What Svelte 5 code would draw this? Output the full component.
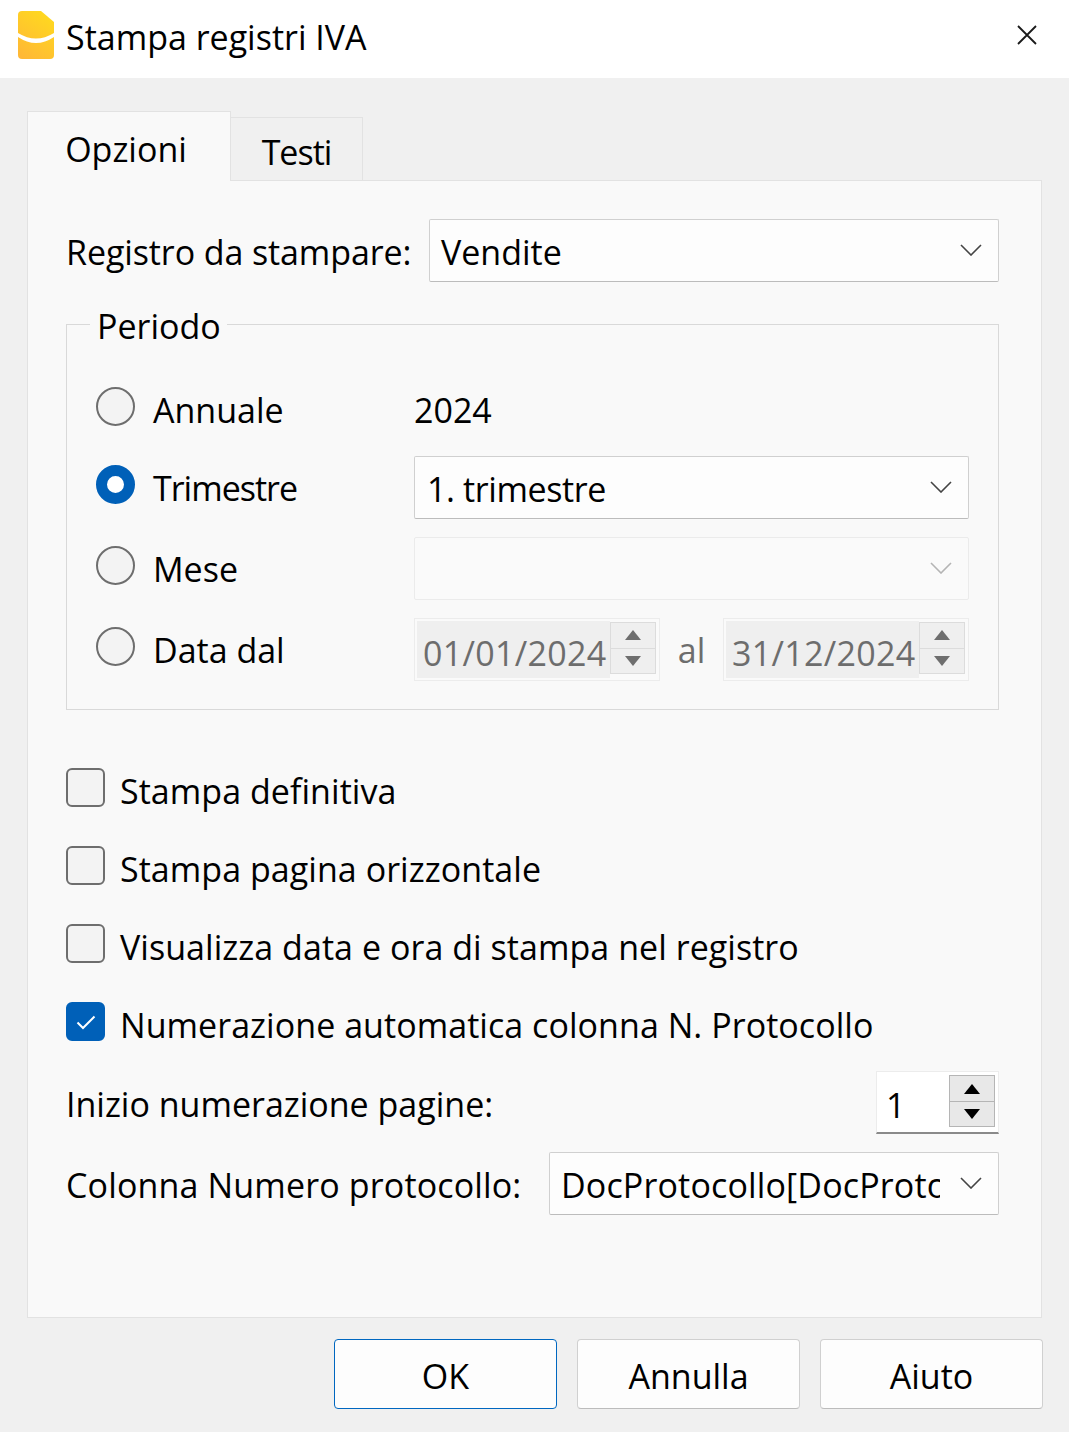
<script>
    let checks = [
        { label: "Stampa definitiva", on: false },
        { label: "Stampa pagina orizzontale", on: false },
        { label: "Visualizza data e ora di stampa nel registro", on: false },
        { label: "Numerazione automatica colonna N. Protocollo", on: true },
    ];
</script>

{#snippet chevron(color)}
    <svg class="chev" viewBox="0 0 22 12" width="22" height="12"><path d="M1 1 L11 11 L21 1" fill="none" stroke={color} stroke-width="1.6" /></svg>
{/snippet}

{#snippet arrows(color)}
    <div class="spin-btn">
        <svg viewBox="0 0 16 10" width="16" height="10"><path d="M8 0 L16 10 L0 10 Z" fill={color} /></svg>
    </div>
    <div class="spin-btn">
        <svg viewBox="0 0 16 10" width="16" height="10"><path d="M0 0 L16 0 L8 10 Z" fill={color} /></svg>
    </div>
{/snippet}

<div class="dialog">
    <header class="title">
        <svg class="logo" viewBox="0 0 36 48" width="36" height="48">
            <defs>
                <linearGradient id="g" x1="0.75" y1="0" x2="0.2" y2="1">
                    <stop offset="0" stop-color="#ffd91f" />
                    <stop offset="1" stop-color="#ffb836" />
                </linearGradient>
            </defs>
            <path d="M4 0 H23 L36 11 V44 Q36 48 32 48 H4 Q0 48 0 44 V4 Q0 0 4 0 Z" fill="url(#g)" />
            <path d="M0 22 Q18 33 36 22 V26 Q18 38 0 26 Z" fill="#fff" />
        </svg>
        <span class="title-text">Stampa registri IVA</span>
        <svg class="close" viewBox="0 0 20 20" width="20" height="20"><path d="M1 1 L19 19 M19 1 L1 19" stroke="#1a1a1a" stroke-width="1.8" /></svg>
    </header>

    <main class="body">
        <div class="tabs">
            <div class="tab active">Opzioni</div>
            <div class="tab">Testi</div>
        </div>

        <section class="pane">
            <div class="row first">
                <span class="lbl">Registro da stampare:</span>
                <div class="combo reg"><span class="val">Vendite</span>{@render chevron("#444")}</div>
            </div>

            <fieldset class="group">
                <legend>Periodo</legend>
                <div class="grid">
                    <div class="opt"><span class="radio"></span><span>Annuale</span></div>
                    <div class="year">2024</div>

                    <div class="opt"><span class="radio on"></span><span class="tight">Trimestre</span></div>
                    <div class="combo"><span class="val trim">1. trimestre</span>{@render chevron("#444")}</div>

                    <div class="opt"><span class="radio"></span><span>Mese</span></div>
                    <div class="combo off">{@render chevron("#b4b4b4")}</div>

                    <div class="opt"><span class="radio"></span><span>Data dal</span></div>
                    <div class="dates">
                        <div class="date">
                            <span class="date-val">01/01/2024</span>
                            <div class="spin off">{@render arrows("#6e6e6e")}</div>
                        </div>
                        <span class="al">al</span>
                        <div class="date">
                            <span class="date-val">31/12/2024</span>
                            <div class="spin off">{@render arrows("#6e6e6e")}</div>
                        </div>
                    </div>
                </div>
            </fieldset>

            <div class="checks">
                {#each checks as c}
                    <div class="check">
                        <span class="box" class:on={c.on}>
                            {#if c.on}
                                <svg viewBox="0 0 20 16" width="20" height="16"><path d="M1.5 8.5 L7 14 L18.5 2.5" fill="none" stroke="#fff" stroke-width="2" /></svg>
                            {/if}
                        </span>
                        <span>{c.label}</span>
                    </div>
                {/each}
            </div>

            <div class="row pages">
                <span class="lbl">Inizio numerazione pagine:</span>
                <div class="num">
                    <span class="num-val">1</span>
                    <div class="spin">{@render arrows("#000")}</div>
                </div>
            </div>

            <div class="row proto">
                <span class="lbl">Colonna Numero protocollo:</span>
                <div class="combo col"><span class="val clip">DocProtocollo[DocProtocollo]</span>{@render chevron("#444")}</div>
            </div>
        </section>

        <footer class="buttons">
            <button class="default">OK</button>
            <button>Annulla</button>
            <button>Aiuto</button>
        </footer>
    </main>
</div>

<style>
    :global(body) {
        margin: 0;
        background: #f0f0f0;
    }

    .dialog {
        width: 1069px;
        height: 1432px;
        font-family: "Open Sans", "Noto Sans", sans-serif;
        font-size: 34px;
        color: #000;
        overflow: hidden;
    }

    .title {
        height: 78px;
        background: #fff;
        display: flex;
        align-items: flex-start;
        padding: 11px 32px 0 18px;
        box-sizing: border-box;
    }

    .title-text {
        margin-left: 12px;
        margin-top: 3px;
        line-height: 46px;
    }

    .close {
        margin-left: auto;
        margin-top: 14px;
    }

    .body {
        padding: 33px 26px 0 27px;
    }

    .tabs {
        display: flex;
        align-items: flex-end;
        height: 70px;
        position: relative;
        z-index: 1;
    }

    .tab {
        box-sizing: border-box;
        width: 132px;
        height: 63px;
        margin-bottom: 1px;
        background: #f0f0f0;
        border: 1px solid #e2e2e2;
        border-width: 1px 1px 0 0;
        text-align: center;
        line-height: 68px;
        letter-spacing: -1px;
    }

    .tab.active {
        width: 204px;
        height: 70px;
        margin-bottom: 0;
        background: #f9f9f9;
        border-width: 1px 1px 0 1px;
        line-height: 74px;
        padding-right: 6px;
        letter-spacing: 0;
    }

    .pane {
        box-sizing: border-box;
        width: 1015px;
        height: 1138px;
        margin-top: -1px;
        background: #f9f9f9;
        border: 1px solid #e2e2e2;
        padding: 38px 42px 0 38px;
    }

    .row {
        display: flex;
        align-items: center;
        justify-content: space-between;
        height: 63px;
    }

    .lbl {
        padding-top: 2px;
    }

    .first .lbl {
        letter-spacing: -0.1px;
    }

    .combo {
        box-sizing: border-box;
        height: 63px;
        background: #fdfdfd;
        border: 1px solid #d0d0d0;
        border-bottom-color: #bcbcbc;
        border-radius: 2px;
        display: flex;
        align-items: center;
        padding: 0 16px 0 12px;
    }

    .combo.off {
        background: #fafafa;
        border-color: #ebebeb;
    }

    .combo.reg {
        width: 570px;
        padding-left: 11px;
    }

    .combo.col {
        width: 450px;
        padding-left: 11px;
    }

    .val {
        flex: 1;
        white-space: nowrap;
        padding-top: 2px;
    }

    .val.trim {
        letter-spacing: -0.4px;
    }

    .val.clip {
        overflow: hidden;
        margin-right: 20px;
        letter-spacing: 0.15px;
    }

    .chev {
        margin-left: auto;
        margin-top: -2px;
    }

    .group {
        margin: 20px 0 0;
        padding: 0;
        width: 933px;
        box-sizing: border-box;
        height: 408px;
        border: 1px solid #d9d9d9;
        min-width: 0;
    }

    legend {
        margin-left: 23px;
        padding: 4px 6px 0 7px;
        line-height: 40px;
    }

    .grid {
        display: grid;
        grid-template-columns: 318px 555px;
        grid-template-rows: 60px 63px 63px 63px;
        row-gap: 18px;
        padding: 32px 0 0 29px;
    }

    .opt {
        display: flex;
        align-items: center;
        gap: 18px;
        padding-top: 1px;
    }

    .opt:first-child {
        padding-top: 3px;
    }

    .radio {
        box-sizing: border-box;
        width: 39px;
        height: 39px;
        border-radius: 50%;
        background: #f3f3f3;
        border: 2px solid #6e6e6e;
        margin-top: -8px;
        flex: none;
    }

    .opt:first-child .radio {
        margin-top: -6px;
    }

    .radio.on {
        background: #fff;
        border: 11.5px solid #0060b8;
    }

    .tight {
        letter-spacing: -1px;
    }

    .year {
        display: flex;
        align-items: center;
        padding-top: 4px;
    }

    .dates {
        display: flex;
        align-items: center;
        justify-content: space-between;
    }

    .date {
        box-sizing: border-box;
        width: 246px;
        height: 63px;
        background: #fafafa;
        border: 1px solid #ececec;
        display: flex;
        align-items: center;
        padding: 0 3px 0 2px;
        color: #6d6d6d;
    }

    .date-val {
        box-sizing: border-box;
        width: 193px;
        height: 57px;
        background: #efefef;
        padding: 4px 0 0 6px;
        line-height: 57px;
        letter-spacing: 0.3px;
    }

    .al {
        color: #6d6d6d;
    }

    .spin {
        box-sizing: border-box;
        width: 46px;
        height: 52px;
        margin-left: auto;
        margin-top: -2px;
        border: 1px solid #b5b5b5;
        background: #e8e8e8;
        display: grid;
        grid-template-rows: 1fr 1fr;
    }

    .spin.off {
        margin-top: -4px;
        border-color: #dcdcdc;
        background: #efefef;
    }

    .spin-btn {
        display: flex;
        align-items: center;
        justify-content: center;
    }

    .spin-btn + .spin-btn {
        border-top: 1px solid #b5b5b5;
    }

    .spin.off .spin-btn + .spin-btn {
        border-top-color: #dcdcdc;
    }

    .checks {
        margin-top: 58px;
        display: grid;
        grid-auto-rows: 39px;
        row-gap: 39px;
    }

    .check {
        display: flex;
        align-items: center;
        gap: 15px;
        letter-spacing: 0.05px;
    }

    .check > span:last-child {
        margin-top: 6px;
    }

    .box {
        box-sizing: border-box;
        width: 39px;
        height: 39px;
        border: 2px solid #6e6e6e;
        border-radius: 6px;
        background: #f3f3f3;
        flex: none;
        display: flex;
        align-items: center;
        justify-content: center;
    }

    .box.on {
        background: #0060b8;
        border-color: #0060b8;
    }

    .pages {
        margin-top: 30px;
    }

    .pages .lbl {
        padding-top: 2px;
    }

    .num {
        box-sizing: border-box;
        width: 123px;
        height: 63px;
        background: #fff;
        border: 1px solid #ececec;
        border-bottom: 2px solid #8a8a8a;
        display: flex;
        align-items: center;
        padding: 0 3px 0 9px;
    }

    .num-val {
        padding-top: 6px;
    }

    .proto {
        margin-top: 18px;
    }

    .proto .lbl {
        letter-spacing: 0.15px;
    }

    button {
        box-sizing: border-box;
        width: 223px;
        height: 70px;
        font: inherit;
        color: #000;
        background: #fdfdfd;
        border: 1px solid #d0d0d0;
        border-bottom-color: #bcbcbc;
        border-radius: 4px;
        padding: 4px 0 0;
    }

    button.default {
        border: 1px solid #0067c0;
    }

    .buttons {
        display: flex;
        justify-content: flex-end;
        gap: 20px;
        margin-top: 21px;
    }
</style>
